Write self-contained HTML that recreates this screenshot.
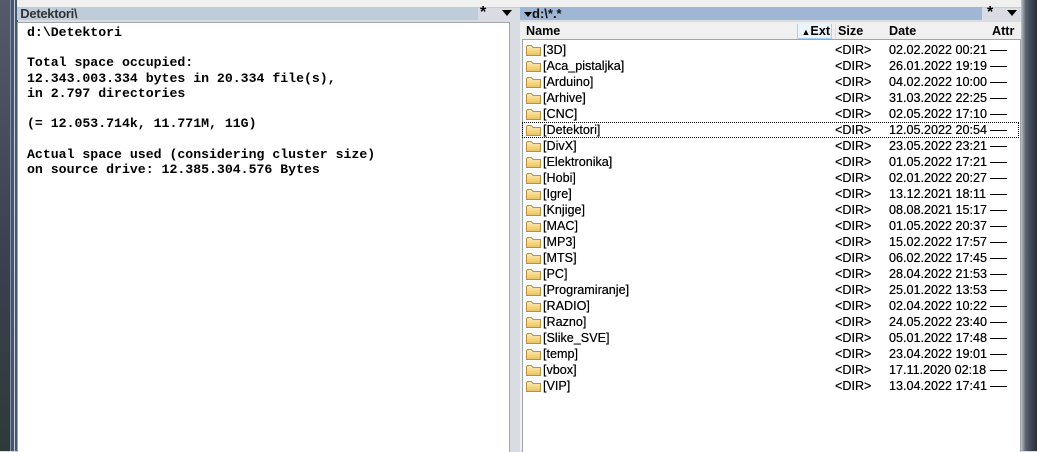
<!DOCTYPE html><html><head><style>
body{margin:0;width:1037px;height:451px;overflow:hidden;background:#d9dde3;position:relative;font-family:"Liberation Sans",sans-serif}
.a{position:absolute}
.row{position:absolute;left:0;height:16px;font-size:12.6px;line-height:16px;color:#000;width:500px;text-shadow:0 0 0.4px #000}
.f{position:absolute;left:4px;top:2px;width:15px;height:12px}
.n{position:absolute;left:21px}
.s{position:absolute;left:313px}
.d{position:absolute;left:367px}
.t{position:absolute;left:468px;top:8px;width:17px;height:1px;background:#000}
pre{margin:0;font-family:"Liberation Mono",monospace;font-weight:bold;font-size:13.2px;line-height:15.2px}
</style></head><body>
<div class="a" style="left:0;top:0;width:10px;height:451px;background:linear-gradient(#555a6a,#3a3f4f 60%,#2e3a3a)"></div>
<div class="a" style="left:10px;top:0;width:7px;height:451px;background:#46566e;border-left:1px solid #8090a8"></div>
<div class="a" style="left:14px;top:0;width:1px;height:451px;background:#c8d0da"></div>
<div class="a" style="left:1021px;top:0;width:16px;height:451px;background:linear-gradient(90deg,#c0c4ca,#5a6272 30%,#404858 60%,#2a2e36)"></div>
<div class="a" style="left:17px;top:0;width:1004px;height:7px;background:#f0f0f0;border-bottom:1px solid #c8ccd2"></div>
<div class="a" style="left:17px;top:7px;width:461px;height:13px;background:#bfcddb;font-size:13px;line-height:13px;color:#333;font-weight:bold;letter-spacing:-0.3px">&nbsp;Detektori\</div>
<div class="a" style="left:480px;top:5px;font-size:16px;line-height:16px;font-weight:bold">*</div>
<div class="a" style="left:502px;top:10px;width:0;height:0;border-left:5px solid transparent;border-right:5px solid transparent;border-top:6px solid #000"></div>
<div class="a" style="left:17px;top:22px;width:491px;height:429px;background:#fff;border:1px solid #a0a4aa;border-bottom:none"></div>
<div class="a" style="left:27px;top:25px"><pre>d:\Detektori

Total space occupied:
12.343.003.334 bytes in 20.334 file(s),
in 2.797 directories

(= 12.053.714k, 11.771M, 11G)

Actual space used (considering cluster size)
on source drive: 12.385.304.576 Bytes</pre></div>
<div class="a" style="left:520px;top:7px;width:462px;height:13px;background:#9fb6d4;font-size:13px;line-height:13px;font-weight:bold;color:#111">
<span style="display:inline-block;margin-left:4px;width:0;height:0;border-left:4px solid transparent;border-right:4px solid transparent;border-top:5px solid #000;vertical-align:middle"></span>d:\*.*</div>
<div class="a" style="left:987px;top:5px;font-size:16px;line-height:16px;font-weight:bold">*</div>
<div class="a" style="left:1007px;top:10px;width:0;height:0;border-left:5px solid transparent;border-right:5px solid transparent;border-top:6px solid #000"></div>
<div class="a" style="left:520px;top:22px;width:501px;height:429px;background:#f0f0f0"></div>
<div class="a" style="left:520px;top:24px;width:499px;height:15px;font-size:12.6px;font-weight:bold;line-height:15px">
<span class="a" style="left:6px">Name</span>
<span class="a" style="left:277px;width:33px;height:14px;border:1px solid #a8d0f0;border-top:none;background:#eaf4fc">&nbsp;<span style="font-size:9px">&#9650;</span>Ext</span>
<span class="a" style="left:315px;border-left:1px solid #ddd;padding-left:2px">Size</span>
<span class="a" style="left:369px">Date</span>
<span class="a" style="left:472px">Attr</span>
</div>
<div class="a" style="left:522px;top:39px;width:497px;height:412px;background:#fff;border:1px solid #a0a4aa;border-bottom:none"></div>
<svg width="0" height="0" style="position:absolute"><defs><linearGradient id="g" x1="0" y1="0" x2="0" y2="1"><stop offset="0" stop-color="#fff2b8"/><stop offset="1" stop-color="#e8c060"/></linearGradient></defs></svg>
<div class="a" style="left:522px;top:42px;width:499px">
<script>
var r=[["3D","02.02.2022 00:21"],["Aca_pistaljka","26.01.2022 19:19"],["Arduino","04.02.2022 10:00"],["Arhive","31.03.2022 22:25"],["CNC","02.05.2022 17:10"],["Detektori","12.05.2022 20:54"],["DivX","23.05.2022 23:21"],["Elektronika","01.05.2022 17:21"],["Hobi","02.01.2022 20:27"],["Igre","13.12.2021 18:11"],["Knjige","08.08.2021 15:17"],["MAC","01.05.2022 20:37"],["MP3","15.02.2022 17:57"],["MTS","06.02.2022 17:45"],["PC","28.04.2022 21:53"],["Programiranje","25.01.2022 13:53"],["RADIO","02.04.2022 10:22"],["Razno","24.05.2022 23:40"],["Slike_SVE","05.01.2022 17:48"],["temp","23.04.2022 19:01"],["vbox","17.11.2020 02:18"],["VIP","13.04.2022 17:41"]];
var h="";for(var i=0;i<r.length;i++){h+='<div class="row" style="top:'+(i*16)+'px;'+(i==5?'outline:1px dotted #000;outline-offset:-1px;width:497px;':'')+'"><svg class="f" viewBox="0 0 15 12"><path d="M0.5 2.5V11.5H14.5V3.5H7L5.5 1.5H1.5Z" fill="url(#g)" stroke="#b89040"/></svg><span class="n">['+r[i][0]+']</span><span class="s">&lt;DIR&gt;</span><span class="d">'+r[i][1]+'</span><span class="t"></span></div>';}
document.write(h);
</script>
</div>
</body></html>
